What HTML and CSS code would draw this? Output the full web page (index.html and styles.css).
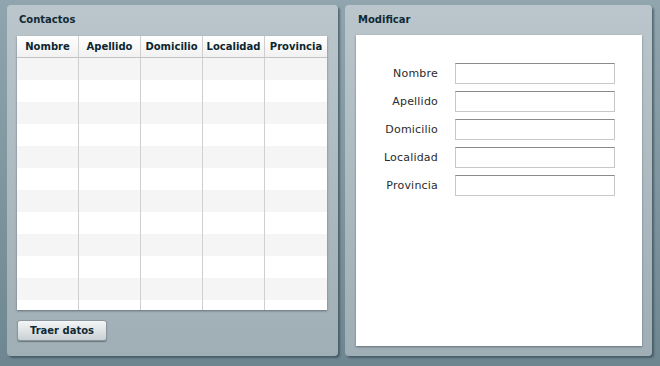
FILE: index.html
```html
<!DOCTYPE html>
<html>
<head>
<meta charset="utf-8">
<link rel="stylesheet" href="styles.css">
</head>
<body>
<div class="app">
  <section class="panel panel-left">
    <h2 class="panel-title">Contactos</h2>
    <div class="grid">
      <div class="grid-head">
        <div class="cell">Nombre</div>
        <div class="cell">Apellido</div>
        <div class="cell">Domicilio</div>
        <div class="cell">Localidad</div>
        <div class="cell">Provincia</div>
      </div>
      <div class="grid-body">
        <div class="row alt"></div>
        <div class="row"></div>
        <div class="row alt"></div>
        <div class="row"></div>
        <div class="row alt"></div>
        <div class="row"></div>
        <div class="row alt"></div>
        <div class="row"></div>
        <div class="row alt"></div>
        <div class="row"></div>
        <div class="row alt"></div>
        <div class="row"></div>
        <div class="cols">
          <span></span><span></span><span></span><span></span><span></span>
        </div>
      </div>
    </div>
    <button class="btn">Traer datos</button>
  </section>
  <section class="panel panel-right">
    <h2 class="panel-title">Modificar</h2>
    <div class="form-box">
      <form class="form">
        <label class="lbl">Nombre</label><input class="inp" type="text">
        <label class="lbl">Apellido</label><input class="inp" type="text">
        <label class="lbl">Domicilio</label><input class="inp" type="text">
        <label class="lbl">Localidad</label><input class="inp" type="text">
        <label class="lbl">Provincia</label><input class="inp" type="text">
      </form>
    </div>
  </section>
</div>
</body>
</html>
```
FILE: styles.css
```css
html, body {
  margin: 0;
  padding: 0;
}
body {
  width: 660px;
  height: 366px;
  overflow: hidden;
  background: linear-gradient(#90a5ae, #6e8690);
  font-family: "DejaVu Sans", Verdana, sans-serif;
}
.app {
  display: flex;
  gap: 7px;
  padding: 5px 8px 0 7px;
}
.panel {
  height: 351px;
  box-sizing: border-box;
  border-radius: 4px;
  background: linear-gradient(#bac6cc, #a0aeb5);
  box-shadow: 2px 2px 2px rgba(40, 60, 70, 0.55);
  display: flex;
  flex-direction: column;
}
.panel-left {
  width: 331px;
  padding: 0 11px 0 10px;
}
.panel-right {
  width: 307px;
  padding: 0 10px 10px 11px;
}
.panel-title {
  margin: 0;
  height: 31px;
  line-height: 29px;
  font-size: 10px;
  font-weight: bold;
  color: #102a33;
  padding-left: 2px;
}
.panel-right .panel-title {
  height: 30px;
}
.grid {
  width: 310px;
  height: 274px;
  background: #fff;
  box-shadow: 0 1px 2px rgba(60, 70, 80, 0.6);
  display: flex;
  flex-direction: column;
  overflow: hidden;
}
.grid-head {
  display: grid;
  grid-template-columns: repeat(5, 62px);
  height: 21px;
  background: linear-gradient(#ffffff, #f1f1f1);
  border-bottom: 1px solid #c4c4c4;
}
.grid-head .cell {
  font-size: 10px;
  font-weight: bold;
  color: #0c2630;
  line-height: 21px;
  text-align: center;
  border-right: 1px solid #cfcfcf;
}
.grid-head .cell:last-child {
  border-right: none;
}
.grid-body {
  position: relative;
  flex: 1;
  overflow: hidden;
}
.row {
  height: 22px;
  background: #fff;
}
.row.alt {
  background: #f5f5f5;
}
.cols {
  position: absolute;
  inset: 0;
  display: grid;
  grid-template-columns: repeat(5, 62px);
}
.cols span {
  border-right: 1px solid #cfcfcf;
}
.cols span:last-child {
  border-right: none;
}
.btn {
  margin-top: 10px;
  width: 90px;
  height: 21px;
  padding: 0;
  border: 1px solid #8b979c;
  border-radius: 3px;
  background: linear-gradient(#f4f6f7, #c9d1d4);
  box-shadow: 0 1px 1px rgba(50, 60, 70, 0.5);
  font-family: "DejaVu Sans", Verdana, sans-serif;
  font-size: 10px;
  font-weight: bold;
  color: #0f2a33;
}
.form-box {
  flex: 1;
  background: #fff;
  box-shadow: 0 1px 2px rgba(60, 70, 80, 0.6);
}
.form {
  display: grid;
  grid-template-columns: 82px 160px;
  column-gap: 17px;
  row-gap: 7px;
  padding-top: 28px;
  align-items: center;
}
.lbl {
  font-size: 11px;
  color: #2b2b2b;
  text-align: right;
  letter-spacing: 0.2px;
}
.inp {
  box-sizing: border-box;
  width: 160px;
  height: 21px;
  margin: 0;
  padding: 0 3px;
  background: #fff;
  border: 1px solid #c8c8c8;
  border-top-color: #8a8a8a;
}
```
